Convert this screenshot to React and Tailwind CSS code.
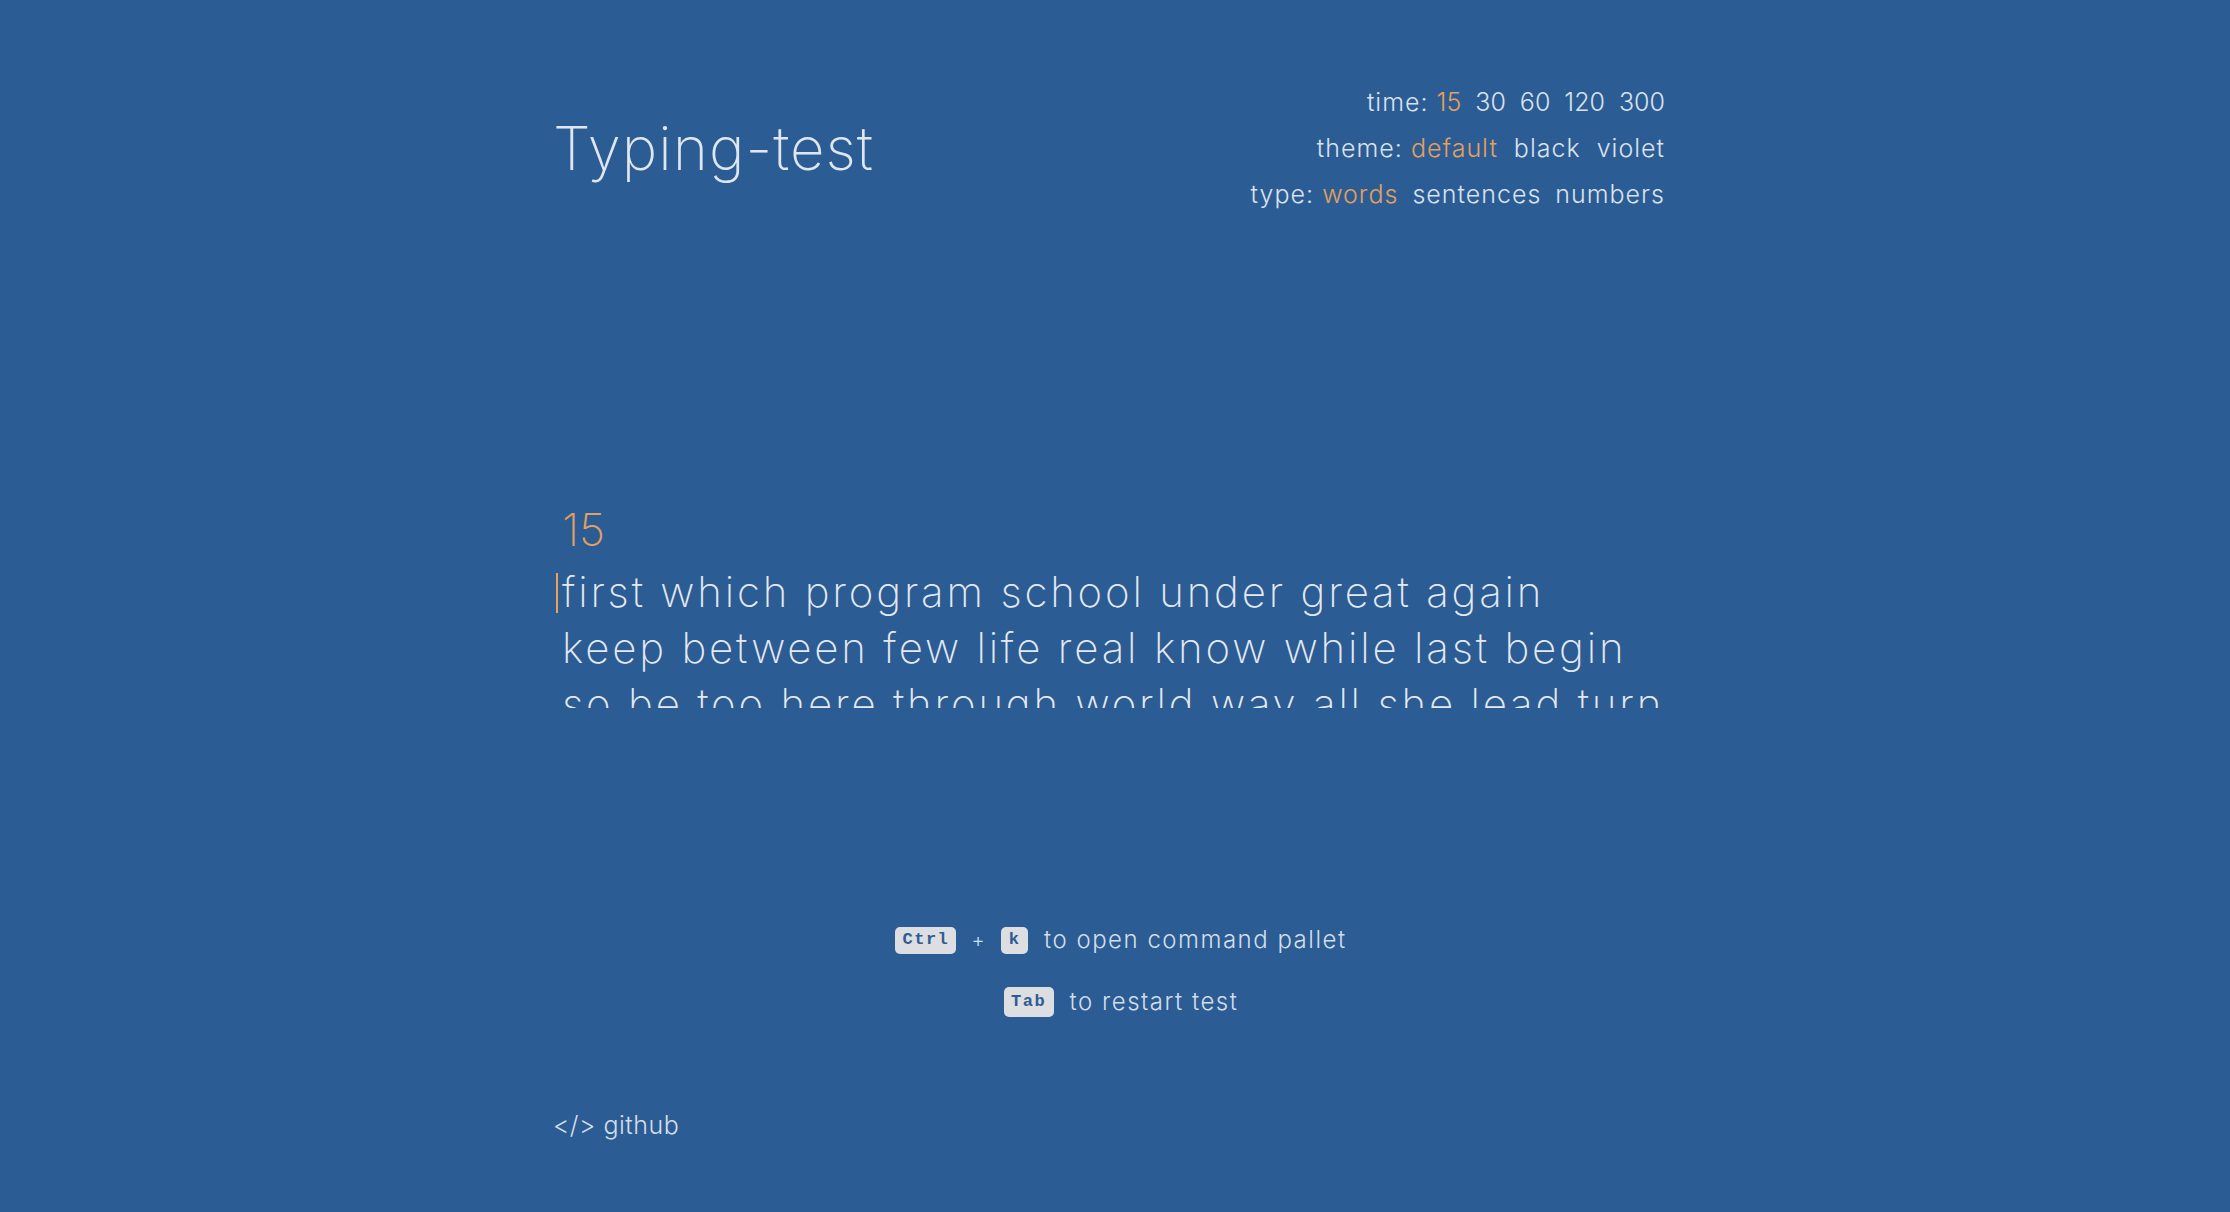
import React from "react";

const lines = [
  "first which program school under great again",
  "keep between few life real know while last begin",
  "so be too here through world way all she lead turn",
];

function Kbd({ children, className = "" }) {
  return (
    <kbd className={"inline-flex items-center justify-center rounded-[5px] bg-[#dcdee2] font-['Liberation_Mono',monospace] text-[17px] font-bold text-[#2c5c94] " + className}>
      {children}
    </kbd>
  );
}

export default function App() {
  const orange = "text-[#e3a05f]";
  return (
    <div className="min-h-screen bg-[#2c5c94] font-['Inter',sans-serif] font-light text-[#dfe6ef]">
      <div className="mx-auto flex w-[1124px] flex-col pr-[12px] pt-[79px]">
        <header className="flex items-center justify-between">
          <h1 className="text-[60px] font-extralight leading-none tracking-[1px]">Typing-test</h1>
          <div className="flex flex-col items-end text-[25px] leading-[46px] tracking-[1px] text-[#d9e2ee]">
            <div className="flex gap-[14px]">
              <span>time: <span className={"tracking-[0px] " + orange}>15</span></span>
              <span className="tracking-[0px]">30</span>
              <span className="tracking-[0px]">60</span>
              <span className="tracking-[0px]">120</span>
              <span className="tracking-[0px]">300</span>
            </div>
            <div className="flex gap-[16px]">
              <span>theme: <span className={orange}>default</span></span>
              <span>black</span>
              <span>violet</span>
            </div>
            <div className="flex gap-[14px]">
              <span>type: <span className={orange}>words</span></span>
              <span>sentences</span>
              <span>numbers</span>
            </div>
          </div>
        </header>

        <main className="mt-[289px]">
          <div className={"pl-[9px] text-[45px] font-extralight leading-[48px] " + orange}>15</div>
          <div className="relative mt-[10px] h-[144px] overflow-hidden text-[42px] font-extralight leading-[56px] tracking-[2.8px] text-[#e4e9f1]">
            <span className="absolute left-[3px] top-[9px] h-[40px] w-[2px] bg-[#e8a25c]" />
            {lines.map((l) => (
              <div key={l} className="whitespace-nowrap pl-[9px]">{l}</div>
            ))}
          </div>
        </main>

        <section className="mt-[212px] flex flex-col items-center gap-[22px] pl-[24px] text-[24px] tracking-[1.5px] text-[#d3deeb]">
          <div className="flex h-[40px] items-center">
            <Kbd className="h-[27px] w-[61px]">Ctrl</Kbd>
            <span className="mx-[15px] text-[20px]">+</span>
            <Kbd className="h-[27px] w-[27px]">k</Kbd>
            <span className="ml-[16px]">to open command pallet</span>
          </div>
          <div className="flex h-[40px] items-center">
            <Kbd className="h-[30px] w-[50px]">Tab</Kbd>
            <span className="ml-[16px]">to restart test</span>
          </div>
        </section>

        <footer className="mt-[83px] h-[40px] text-[25px] leading-[40px] tracking-[0.5px] text-[#d3deeb]">
          &lt;/&gt; github
        </footer>
      </div>
    </div>
  );
}
